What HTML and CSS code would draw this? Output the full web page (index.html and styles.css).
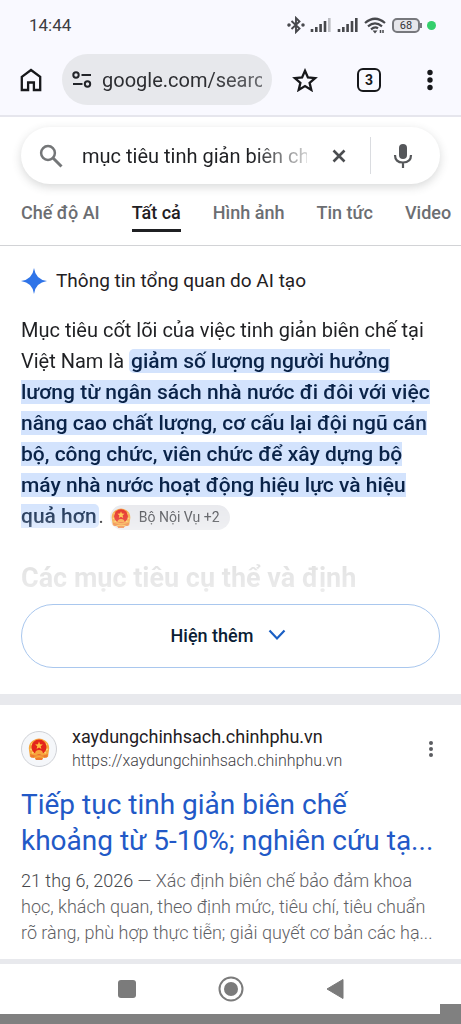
FILE: index.html
```html
<!DOCTYPE html>
<html lang="vi">
<head>
<meta charset="utf-8">
<meta name="viewport" content="width=device-width, initial-scale=1">
<title>mục tiêu tinh giản biên chế</title>
<link rel="stylesheet" href="styles.css">
</head>
<body>
<svg class="defs" width="0" height="0" aria-hidden="true">
  <symbol id="emblem" viewBox="0 0 24 24">
    <path d="M6 3.500Q12-.5 18 3.500Q23 7 22 13L21 20L16 20.500L15 23H9L8 20.500L3 20L2 13Q1 7 6 3.500Z" fill="#f6a63c"/>
    <path d="M3 12l2 1M4 7l2 1M21 12l-2 1M20 7l-2 1M5 16l2-1M19 16l-2-1" stroke="#fbd26a" stroke-width="1.500"/>
    <circle cx="12" cy="10" r="7.500" fill="#e3251b"/>
    <path d="M12 4.500l1 2.700 2.900.2-2.200 1.800.7 2.800-2.400-1.500-2.400 1.500.7-2.800-2.200-1.800 2.900-.2z" fill="#ffc13d"/>
    <path d="M8 17a4 4 0 0 1 8 0z" fill="#f8a53d"/>
    <path d="M3 17l5 1.500h8l5-1.500-1 3.500-4 .5-1 2H9l-1-2-4-.5z" fill="#ee7a2e"/>
    <path d="M7 20.500q5-1.500 10 0" fill="none" stroke="#f9bd45" stroke-width="1.200"/>
  </symbol>
</svg>

<header class="chrome">
  <div class="status">
    <span class="clock">14:44</span>
    <div class="status-icons">
      <svg width="18" height="18" viewBox="0 0 18 18" fill="none" stroke="#47484c" stroke-width="1.900"><path d="M4.500 5l8 7.500L9 16V2l3.500 3.500-8 7.500"/><circle cx="2" cy="9" r=".8" fill="#47484c"/><circle cx="16" cy="9" r=".8" fill="#47484c"/></svg>
      <svg width="22" height="14" viewBox="0 0 22 14" fill="none" stroke="#47484c" stroke-width="2.600"><path d="M2 14v-3M6.300 14V9M10.600 14V6M15 14V3"/><path d="M19.300 14V0" stroke="#bbbcc2"/></svg>
      <svg width="22" height="14" viewBox="0 0 22 14" fill="none" stroke="#47484c" stroke-width="2.600"><path d="M2 14v-3M6.300 14V9M10.600 14V6M15 14V3M19.300 14V0"/></svg>
      <svg width="22" height="17" viewBox="0 0 22 17" fill="none" stroke="#47484c" stroke-width="2.200"><path d="M1 6Q11-2.500 21 6M4 9.300Q11 3.300 18 9.300M7 12.300Q11 9 14 11.300"/><path d="M8.500 13.500h5L11 16.500z" fill="#47484c" stroke="none"/><path d="M16.500 13v3M19 13v3" stroke-width="1.500"/></svg>
      <span class="battery">68</span>
      <span class="live"></span>
    </div>
  </div>
  <div class="toolbar">
    <button class="icon-btn" aria-label="Trang chủ"><svg width="22" height="24" viewBox="0 0 22 24" fill="none" stroke="#17181b" stroke-width="2.300"><path d="M1.800 8.800L11 2l9.200 6.800V22h-6.300v-7.500H8.100V22H1.800z"/></svg></button>
    <label class="address">
      <svg width="20" height="18" viewBox="0 0 20 18" fill="none" stroke="#222429" stroke-width="2"><circle cx="4" cy="4" r="2.700"/><path d="M9.500 4H19M1 13h9.500"/><circle cx="15.500" cy="13" r="2.700"/></svg>
      <input class="url" type="text" value="google.com/search" aria-label="Địa chỉ">
    </label>
    <button class="icon-btn" aria-label="Dấu trang"><svg width="26" height="24" viewBox="0 0 26 24" fill="none" stroke="#17181b" stroke-width="2.300"><path d="M13 2.800l2.900 6.600 7.200.7-5.500 4.700 1.700 7.100-6.300-3.800-6.300 3.800 1.700-7.100L2.900 10.100l7.200-.7z"/></svg></button>
    <button class="tabs-count" aria-label="3 thẻ">3</button>
    <button class="icon-btn" aria-label="Trình đơn"><svg width="8" height="22" viewBox="0 0 8 22" fill="#17181b"><circle cx="4" cy="3.500" r="2.700"/><circle cx="4" cy="11" r="2.700"/><circle cx="4" cy="18.500" r="2.700"/></svg></button>
  </div>
</header>

<form class="search">
  <svg width="24" height="24" viewBox="0 0 24 24" fill="none" stroke="#747678" stroke-width="2.500"><circle cx="9" cy="9" r="6.900"/><path d="M14 14l8.500 8.500" stroke-width="3"/></svg>
  <input class="query" type="text" value="mục tiêu tinh giản biên chế" aria-label="Tìm kiếm">
  <button class="icon-btn clear" type="button" aria-label="Xóa"><svg width="14" height="14" viewBox="0 0 14 14" stroke="#4b4d50" stroke-width="2.600"><path d="M1.500 1.500l11 11M12.500 1.500l-11 11"/></svg></button>
  <button class="icon-btn mic" type="button" aria-label="Tìm kiếm bằng giọng nói"><svg width="20" height="26" viewBox="0 0 20 26" fill="none" stroke="#55575a" stroke-width="2.200"><rect x="6" y="1" width="8" height="15" rx="4" fill="#55575a" stroke="none"/><path d="M2 12q0 7.500 8 7.500t8-7.500M10 19.500V25"/></svg></button>
</form>

<nav class="filters">
  <a href="#ai">Chế độ AI</a>
  <a class="active" href="#all" aria-current="page">Tất cả</a>
  <a href="#images">Hình ảnh</a>
  <a href="#news">Tin tức</a>
  <a href="#video">Video</a>
</nav>

<main>
  <section class="overview">
    <h2 class="overview-title"><svg width="26" height="26" viewBox="0 0 26 26" fill="#2f74e8"><path d="M13 0Q14.500 11.500 26 13Q14.500 14.500 13 26Q11.500 14.500 0 13Q11.500 11.500 13 0z"/></svg>Thông tin tổng quan do AI tạo</h2>
    <div class="preview">
      <p class="answer">Mục tiêu cốt lõi của việc tinh giản biên chế tại<br>Việt Nam là <mark>giảm số lượng người hưởng<br>lương từ ngân sách nhà nước đi đôi với việc<br>nâng cao chất lượng, cơ cấu lại đội ngũ cán<br>bộ, công chức, viên chức để xây dựng bộ<br>máy nhà nước hoạt động hiệu lực và hiệu<br>quả hơn</mark>. <a class="source" href="#sources"><svg width="22" height="22"><use href="#emblem"/></svg>Bộ Nội Vụ +2</a></p>
      <h3 class="subhead">Các mục tiêu cụ thể và định</h3>
    </div>
    <button class="more">Hiện thêm<svg width="18" height="12" viewBox="0 0 18 12" fill="none" stroke="#1a5fc4" stroke-width="2.200"><path d="M1.500 1.500L9 9.500l7.500-8"/></svg></button>
  </section>

  <article class="result">
    <div class="site">
      <span class="favicon"><svg width="24" height="24"><use href="#emblem"/></svg></span>
      <div class="site-text">
        <span class="site-name">xaydungchinhsach.chinhphu.vn</span>
        <span class="site-url">https://xaydungchinhsach.chinhphu.vn</span>
      </div>
      <button class="icon-btn" aria-label="Giới thiệu về kết quả này"><svg width="6" height="18" viewBox="0 0 6 18" fill="#5b5d61"><circle cx="3" cy="3" r="2"/><circle cx="3" cy="9" r="2"/><circle cx="3" cy="15" r="2"/></svg></button>
    </div>
    <h3 class="title"><a href="#result">Tiếp tục tinh giản biên chế<br>khoảng từ 5-10%; nghiên cứu tạ...</a></h3>
    <p class="snippet"><span class="date">21 thg 6, 2026</span> — Xác định biên chế bảo đảm khoa<br>học, khách quan, theo định mức, tiêu chí, tiêu chuẩn<br>rõ ràng, phù hợp thực tiễn; giải quyết cơ bản các hạ...</p>
  </article>
</main>

<footer class="system-nav">
  <button class="icon-btn" aria-label="Gần đây"><svg width="20" height="20"><rect x="1" y="1" width="18" height="18" rx="3" fill="#7b7b7b"/></svg></button>
  <button class="icon-btn" aria-label="Màn hình chính"><svg width="26" height="26"><circle cx="13" cy="13" r="11.500" fill="none" stroke="#7b7b7b" stroke-width="2"/><circle cx="13" cy="13" r="7" fill="#7b7b7b"/></svg></button>
  <button class="icon-btn" aria-label="Quay lại"><svg width="20" height="22"><path d="M18 1.500v19L2 11z" fill="#7b7b7b" stroke="#7b7b7b" stroke-linejoin="round"/></svg></button>
  <span class="corner"></span>
</footer>
</body>
</html>
```

FILE: styles.css
```css
* { box-sizing: border-box; }

body {
  margin: 0;
  min-height: 100vh;
  display: flex;
  flex-direction: column;
  background: #fff;
  color: #1f2023;
  font-family: Roboto, "Noto Sans", sans-serif;
}

h2, h3, p { margin: 0; }
svg { display: block; flex: none; }
a { color: inherit; text-decoration: none; }
.defs { position: absolute; }

.icon-btn {
  display: grid;
  place-items: center;
  flex: none;
  padding: 0;
  border: 0;
  background: none;
}

input {
  min-width: 0;
  padding: 0;
  border: 0;
  outline: 0;
  background: none;
  font-family: inherit;
}

.chrome {
  background: #f9f9ff;
  border-bottom: 2px solid #e6e6ed;
}

.status {
  display: flex;
  justify-content: space-between;
  align-items: center;
  height: 50px;
  padding: 0 25px 0 29px;
}

.clock { font-size: 17px; color: #3c3d41; }
.status-icons { display: flex; align-items: center; gap: 5px; }

.battery {
  position: relative;
  width: 28px;
  margin: 0 2px 0 1px;
  border: 2px solid #77787d;
  border-radius: 5px;
  background: #e6e6eb;
  color: #333438;
  font-size: 11px;
  line-height: 11px;
  text-align: center;
}

.battery::after {
  content: "";
  position: absolute;
  top: 3px;
  right: -4px;
  width: 2px;
  height: 5px;
  background: #77787d;
}

.live { width: 9px; height: 9px; border-radius: 50%; background: #34cf6c; }

.toolbar {
  display: flex;
  align-items: center;
  gap: 20px;
  padding: 4px 27px 10px 20px;
}

.address {
  display: flex;
  flex: 1;
  align-items: center;
  gap: 10px;
  min-width: 0;
  height: 51px;
  padding: 0 10px;
  border-radius: 26px;
  background: #e7e8ec;
}

.url {
  flex: 1;
  height: 30px;
  color: #2d2e32;
  font-size: 20px;
  mask-image: linear-gradient(to right, #000 65%, #000a);
}

.tabs-count {
  flex: none;
  width: 24px;
  height: 24px;
  margin: 0 25px 0 19px;
  padding: 0;
  border: 2px solid #17181b;
  border-radius: 6px;
  background: none;
  color: #17181b;
  font: 700 14px/20px Roboto, sans-serif;
}

.search {
  display: flex;
  align-items: center;
  height: 57px;
  margin: 10px 21px 0;
  padding: 0 0 0 18px;
  border-radius: 29px;
  box-shadow: 0 3px 10px rgba(60, 64, 67, .2);
}

.query {
  flex: 1;
  height: 34px;
  margin-left: 19px;
  color: #1f2023;
  font-size: 20px;
  mask-image: linear-gradient(to right, #000 76%, #0003);
}

.clear { width: 64px; height: 37px; border-right: 1px solid #dadce0; }
.mic { width: 69px; height: 37px; padding-right: 6px; }

.filters {
  display: flex;
  gap: 32px;
  overflow: hidden;
  padding: 16px 0 13px 21px;
  border-bottom: 1px solid #d2d3d6;
  color: #6c6e72;
  font-size: 18px;
  font-weight: 500;
  line-height: 26px;
  white-space: nowrap;
}

.filters a { padding-bottom: 3px; border-bottom: 3px solid transparent; }
.filters .active { color: #1f2023; border-color: #1f2023; }

main { flex: 1; }

.overview { padding: 20px 21px 26px; border-bottom: 11px solid #e8e9ed; }

.overview-title {
  display: flex;
  align-items: center;
  gap: 9px;
  font-size: 19px;
  font-weight: 400;
  line-height: 30px;
}

.preview {
  padding-top: 19px;
  white-space: nowrap;
  mask-image: linear-gradient(to bottom, #000 66%, #000c 73%, #0002 86%, #0001);
}

.answer { font-size: 20px; line-height: 31px; }

mark {
  padding: 0 2px;
  border-radius: 5px;
  background: #d3e3fd;
  color: #0a2348;
  font-size: 21px;
  font-weight: 500;
}

.source {
  display: inline-flex;
  align-items: center;
  gap: 7px;
  height: 25px;
  margin-left: 1px;
  padding-right: 10px;
  border-radius: 13px;
  background: #e8e9ed;
  color: #4b4d52;
  font-size: 14px;
  line-height: 25px;
  vertical-align: middle;
}

.subhead { padding: 31px 0 11px; font-size: 27px; font-weight: 700; line-height: 30px; }

.more {
  display: flex;
  align-items: center;
  justify-content: center;
  gap: 15px;
  width: 100%;
  height: 64px;
  padding: 0 4px 2px 0;
  border: 1px solid #a9c7ee;
  border-radius: 32px;
  background: #fff;
  color: #0a1d35;
  font-family: inherit;
  font-size: 18px;
  font-weight: 500;
}

.result { padding: 20px 21px 12px; white-space: nowrap; }
.site { display: flex; align-items: center; gap: 15px; padding-right: 6px; }

.favicon {
  display: grid;
  place-items: center;
  width: 36px;
  height: 36px;
  border: 1px solid #cfd1d6;
  border-radius: 50%;
  background: #f5f7fa;
}

.site-text { display: grid; flex: 1; line-height: 24px; }
.site-name { font-size: 18px; }
.site-url { color: #3f4145; font-size: 16px; font-weight: 300; }

.title { padding-top: 14px; color: #2259c7; font-size: 28px; font-weight: 400; line-height: 36px; }
.snippet { padding-top: 9px; color: #5f6165; font-size: 18px; font-weight: 300; line-height: 26px; }
.date { color: #45474b; }

.system-nav {
  position: relative;
  display: flex;
  align-items: center;
  justify-content: center;
  gap: 81px;
  height: 65px;
  border-top: 5px solid #e8e9ed;
  border-bottom: 10px solid #808080;
}

.corner { position: absolute; right: 0; bottom: 0; width: 21px; height: 10px; background: #808080; }
```
